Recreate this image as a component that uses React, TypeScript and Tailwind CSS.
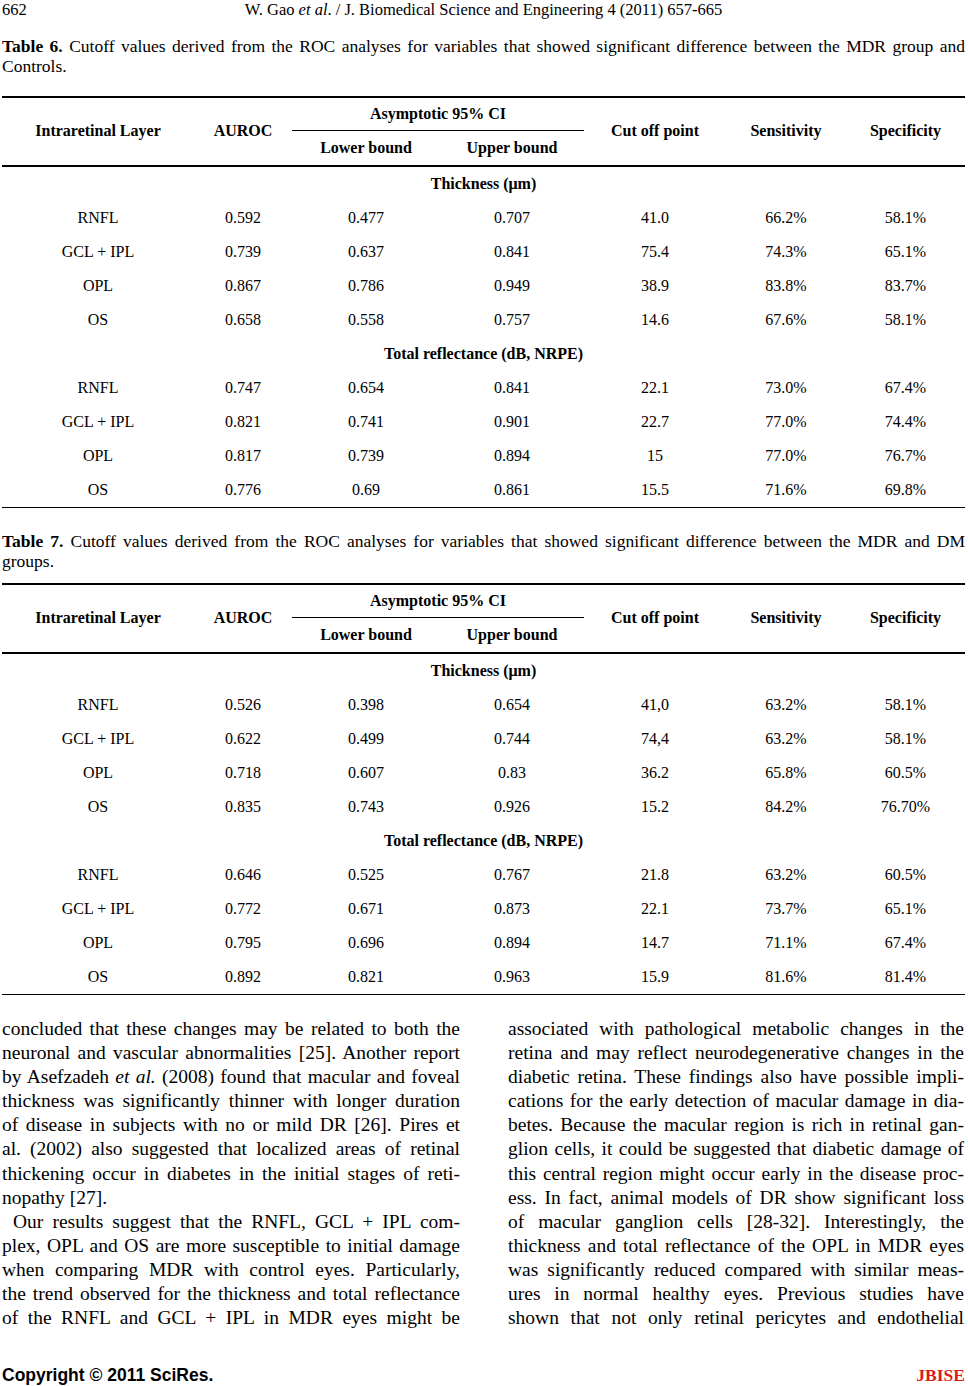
import React from "react";

type Row = string[];

const COLS = "grid grid-cols-[192px_98px_148px_144px_142px_120px_119px]";

const t6Thick: Row[] = [
  ["RNFL", "0.592", "0.477", "0.707", "41.0", "66.2%", "58.1%"],
  ["GCL + IPL", "0.739", "0.637", "0.841", "75.4", "74.3%", "65.1%"],
  ["OPL", "0.867", "0.786", "0.949", "38.9", "83.8%", "83.7%"],
  ["OS", "0.658", "0.558", "0.757", "14.6", "67.6%", "58.1%"],
];
const t6Refl: Row[] = [
  ["RNFL", "0.747", "0.654", "0.841", "22.1", "73.0%", "67.4%"],
  ["GCL + IPL", "0.821", "0.741", "0.901", "22.7", "77.0%", "74.4%"],
  ["OPL", "0.817", "0.739", "0.894", "15", "77.0%", "76.7%"],
  ["OS", "0.776", "0.69", "0.861", "15.5", "71.6%", "69.8%"],
];
const t7Thick: Row[] = [
  ["RNFL", "0.526", "0.398", "0.654", "41,0", "63.2%", "58.1%"],
  ["GCL + IPL", "0.622", "0.499", "0.744", "74,4", "63.2%", "58.1%"],
  ["OPL", "0.718", "0.607", "0.83", "36.2", "65.8%", "60.5%"],
  ["OS", "0.835", "0.743", "0.926", "15.2", "84.2%", "76.70%"],
];
const t7Refl: Row[] = [
  ["RNFL", "0.646", "0.525", "0.767", "21.8", "63.2%", "60.5%"],
  ["GCL + IPL", "0.772", "0.671", "0.873", "22.1", "73.7%", "65.1%"],
  ["OPL", "0.795", "0.696", "0.894", "14.7", "71.1%", "67.4%"],
  ["OS", "0.892", "0.821", "0.963", "15.9", "81.6%", "81.4%"],
];

function DataRow({ r }: { r: Row }) {
  return (
    <div className={`${COLS} h-[34px] items-center text-center`}>
      {r.map((c, i) => (
        <div key={i}>{c}</div>
      ))}
    </div>
  );
}

function Section({ label }: { label: string }) {
  return <div className="h-[34px] flex items-center justify-center font-bold">{label}</div>;
}

function DataTable({ thick, refl }: { thick: Row[]; refl: Row[] }) {
  return (
    <div className="text-[16px] leading-[18px]">
      <div className="h-[1.5px] bg-black" />
      <div className={`${COLS} grid-rows-[33.5px_34px] font-bold`}>
        <div className="row-span-2 flex items-center justify-center">Intraretinal Layer</div>
        <div className="row-span-2 flex items-center justify-center">AUROC</div>
        <div className="col-span-2 flex items-center justify-center border-b border-black">Asymptotic 95% CI</div>
        <div className="row-span-2 flex items-center justify-center">Cut off point</div>
        <div className="row-span-2 flex items-center justify-center">Sensitivity</div>
        <div className="row-span-2 flex items-center justify-center">Specificity</div>
        <div className="flex items-center justify-center">Lower bound</div>
        <div className="flex items-center justify-center">Upper bound</div>
      </div>
      <div className="h-[1.5px] bg-black" />
      <Section label="Thickness (μm)" />
      {thick.map((r, i) => (
        <DataRow key={"t" + i} r={r} />
      ))}
      <Section label="Total reflectance (dB, NRPE)" />
      {refl.map((r, i) => (
        <DataRow key={"r" + i} r={r} />
      ))}
      <div className="h-[1.5px] bg-black" />
    </div>
  );
}

function J({ children, last }: { children: React.ReactNode; last?: boolean }) {
  return (
    <div className={last ? "text-left" : "text-justify [text-align-last:justify]"}>{children}</div>
  );
}

export default function App() {
  return (
    <div className="w-[968px] h-[1386px] overflow-hidden bg-white text-black font-['Liberation_Serif','Times_New_Roman',serif]">
      <div className="ml-[2px] w-[963px]">
        {/* running header */}
        <div className="grid grid-cols-[1fr_auto_1fr] h-[20px] text-[16.5px] leading-[20px]">
          <span>662</span>
          <span>
            W. Gao <i>et al</i>. / J. Biomedical Science and Engineering 4 (2011) 657-665
          </span>
          <span />
        </div>

        {/* Table 6 */}
        <div className="mt-[16px] text-[17.5px] leading-[20px]">
          <J>
            <b>Table 6.</b> Cutoff values derived from the ROC analyses for variables that showed significant
            difference between the MDR group and
          </J>
          <J last>Controls.</J>
        </div>
        <div className="mt-[20px]">
          <DataTable thick={t6Thick} refl={t6Refl} />
        </div>

        {/* Table 7 */}
        <div className="mt-[23px] text-[17.5px] leading-[20px]">
          <J>
            <b>Table 7.</b> Cutoff values derived from the ROC analyses for variables that showed significant
            difference between the MDR and DM
          </J>
          <J last>groups.</J>
        </div>
        <div className="mt-[12px]">
          <DataTable thick={t7Thick} refl={t7Refl} />
        </div>

        {/* body text */}
        <div className="mt-[22px] grid grid-cols-[458px_456px] gap-x-[48px] text-[19.5px] leading-[24.1px]">
          <div>
            <J>concluded that these changes may be related to both the</J>
            <J>neuronal and vascular abnormalities [25]. Another report</J>
            <J>
              by Asefzadeh <i>et al.</i> (2008) found that macular and foveal
            </J>
            <J>thickness was significantly thinner with longer duration</J>
            <J>of disease in subjects with no or mild DR [26]. Pires et</J>
            <J>al. (2002) also suggested that localized areas of retinal</J>
            <J>thickening occur in diabetes in the initial stages of reti-</J>
            <J last>nopathy [27].</J>
            <div className="pl-[11px] text-justify [text-align-last:justify]">
              Our results suggest that the RNFL, GCL + IPL com-
            </div>
            <J>plex, OPL and OS are more susceptible to initial damage</J>
            <J>when comparing MDR with control eyes. Particularly,</J>
            <J>the trend observed for the thickness and total reflectance</J>
            <J>of the RNFL and GCL + IPL in MDR eyes might be</J>
          </div>
          <div>
            <J>associated with pathological metabolic changes in the</J>
            <J>retina and may reflect neurodegenerative changes in the</J>
            <J>diabetic retina. These findings also have possible impli-</J>
            <J>cations for the early detection of macular damage in dia-</J>
            <J>betes. Because the macular region is rich in retinal gan-</J>
            <J>glion cells, it could be suggested that diabetic damage of</J>
            <J>this central region might occur early in the disease proc-</J>
            <J>ess. In fact, animal models of DR show significant loss</J>
            <J>of macular ganglion cells [28-32]. Interestingly, the</J>
            <J>thickness and total reflectance of the OPL in MDR eyes</J>
            <J>was significantly reduced compared with similar meas-</J>
            <J>ures in normal healthy eyes. Previous studies have</J>
            <J>shown that not only retinal pericytes and endothelial</J>
          </div>
        </div>

        {/* footer */}
        <div className="mt-[35px] flex items-start justify-between h-[20px] leading-[20px] text-[17.5px] font-bold">
          <span className="font-['Liberation_Sans',Arial,sans-serif]">Copyright © 2011 SciRes.</span>
          <span className="text-[#dd1a1a]">JBISE</span>
        </div>
      </div>
    </div>
  );
}
